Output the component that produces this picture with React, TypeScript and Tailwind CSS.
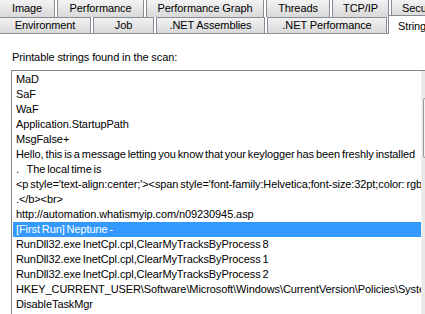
import React from "react"

const rowOne = [
  { label: "Image", w: "w-[56px]" },
  { label: "Performance", w: "w-[87px]" },
  { label: "Performance Graph", w: "w-[118px]" },
  { label: "Threads", w: "w-[64px]" },
  { label: "TCP/IP", w: "w-[57px]" },
]

const rowTwo = [
  { label: "Environment", w: "w-[92px]" },
  { label: "Job", w: "w-[61px]" },
  { label: ".NET Assemblies", w: "w-[109px]" },
  { label: ".NET Performance", w: "w-[120px]" },
]

const strings = [
  "MaD",
  "SaF",
  "WaF",
  "Application.StartupPath",
  "MsgFalse+",
  "Hello, this is a message letting you know that your keylogger has been freshly installed",
  ".    The local time is",
  "<p style='text-align:center;'><span style='font-family:Helvetica;font-size:32pt;color: rgb(255,0,0);'>",
  ".</b><br>",
  "http://automation.whatismyip.com/n09230945.asp",
  "[First Run] Neptune -",
  "RunDll32.exe InetCpl.cpl,ClearMyTracksByProcess 8",
  "RunDll32.exe InetCpl.cpl,ClearMyTracksByProcess 1",
  "RunDll32.exe InetCpl.cpl,ClearMyTracksByProcess 2",
  "HKEY_CURRENT_USER\\Software\\Microsoft\\Windows\\CurrentVersion\\Policies\\System",
  "DisableTaskMgr",
]

const tabLook =
  "shrink-0 h-full mr-[2px] flex items-center border-x border-[#898c95] bg-gradient-to-b from-[#f2f2f2] to-[#d9d9d9] text-black"

const Tab = ({ label, w, top }: { label: string; w: string; top?: boolean }) => (
  <div className={`${w} ${tabLook} justify-center ${top ? "" : "border-t"}`}>{label}</div>
)

export default function App() {
  return (
    <div
      className="w-[425px] h-[314px] overflow-hidden bg-white text-[11px] leading-[13px] tracking-[-0.1px] text-black"
      style={{ fontFamily: "Tahoma, 'Liberation Sans', Arial, sans-serif" }}>
      {/* tab strip */}
      <div className="relative h-[34px] border-b border-[#898c95]">
        <div className="flex h-[17px] -ml-[1px]">
          {rowOne.map((t) => (
            <Tab key={t.label} label={t.label} w={t.w} top />
          ))}
          <div className={`w-[60px] ${tabLook} pl-[10px] whitespace-nowrap`}>Security</div>
        </div>
        <div className="flex h-[16px] -ml-[1px]">
          {rowTwo.map((t) => (
            <Tab key={t.label} label={t.label} w={t.w} />
          ))}
          <div className="relative z-10 -mt-[2px] h-[19px] w-[60px] shrink-0 -ml-[1px] border-x border-t border-[#898c95] bg-white flex items-start pt-[4px] pl-[9px]">
            Strings
          </div>
        </div>
      </div>

      {/* tab page */}
      <div className="pt-[17px]">
        <div className="pl-[12px] h-[19px]">Printable strings found in the scan:</div>
        <div className="ml-[11px] flex border-t border-l border-[#828790] h-[260px]">
          <div className="w-[409px] shrink-0 pt-[1px] pl-[1px] overflow-hidden [word-spacing:-1px]">
            {strings.map((s, i) => (
              <div
                key={i}
                className={`h-[15px] leading-[15px] pl-[3px] whitespace-pre overflow-hidden ${
                  i === 10 ? "bg-[#3399ff] text-white" : ""
                }`}>
                {s}
              </div>
            ))}
          </div>
          <div className="w-[17px] shrink-0 bg-[#e9e9e9] border-l border-[#f0f0f0] flex flex-col">
            <div className="h-[27px]" />
            <div className="h-[60px] mx-[1px] border border-[#979797] rounded-[2px] bg-gradient-to-r from-[#f3f3f3] to-[#d8d8d8]" />
          </div>
        </div>
      </div>
    </div>
  )
}
